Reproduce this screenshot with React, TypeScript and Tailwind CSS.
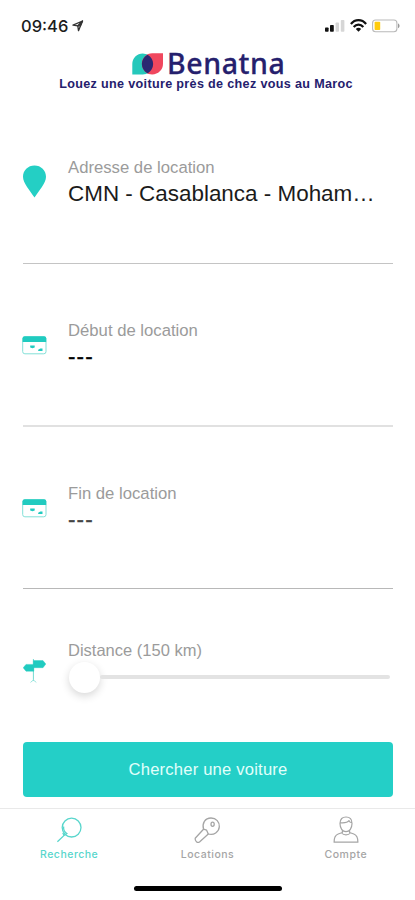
import type { ReactNode } from "react";

const sans = "font-['Liberation_Sans',Arial,sans-serif]";

function StatusBar() {
  return (
    <div className="flex h-[50px] items-start justify-between pt-[15px] pl-[21px] pr-[15px]">
      <div className="flex items-start gap-[4px]">
        <span className="font-['Inter',sans-serif] text-[16.5px] leading-[22px] font-medium text-[#1c1c1c]">09:46</span>
        <svg className="mt-[5px]" width="12" height="12" viewBox="0 0 12 12" fill="none" stroke="#333" strokeWidth="1.3" strokeLinejoin="round">
          <path d="M10.5 1 L1 5.2 L5.8 5.8 L6.5 10.7 Z" />
          <path d="M10.5 1 L5.8 5.8 L8.4 5.8 Z" fill="#333" />
        </svg>
      </div>
      <div className="flex items-start pt-[4px]">
        <svg width="20" height="14" viewBox="0 0 20 14">
          <rect x="0" y="8.5" width="3.6" height="4.2" rx="0.8" fill="#111" />
          <rect x="5" y="6" width="3.8" height="6.7" rx="0.8" fill="#111" />
          <rect x="10.6" y="3.5" width="3.4" height="9.2" rx="0.8" fill="#d6d6d6" />
          <rect x="15.8" y="1" width="3.6" height="11.7" rx="0.8" fill="#d6d6d6" />
        </svg>
        <svg className="ml-[5px]" width="17" height="14" viewBox="0 0 17 14" fill="none" stroke="#111" strokeWidth="2.2">
          <path d="M0.9 5 C5 -0.1 12 -0.1 16.1 5" />
          <path d="M3.7 8 C6.4 4.8 10.6 4.8 13.3 8" />
          <path d="M5.8 10 C7.3 8.4 9.7 8.4 11.2 10 L8.5 12.8 Z" fill="#111" stroke="none" />
        </svg>
        <svg className="ml-[5px]" width="28" height="14" viewBox="0 0 28 14">
          <rect x="0.6" y="1" width="24.3" height="11.8" rx="3" fill="#fff" stroke="#b9b9b9" strokeWidth="1.1" />
          <rect x="2.6" y="2.8" width="5.6" height="8.2" rx="0.8" fill="#ffcb0c" />
          <path d="M26 4.6 C28 5.3 28 8.5 26 9.2 Z" fill="#999" />
        </svg>
      </div>
    </div>
  );
}

function Brand() {
  return (
    <div className="h-[51px] text-[#25206d]">
      <div className="flex h-[27px] items-start pl-[132px]">
        <svg className="mt-[2.5px] shrink-0" width="31" height="22" viewBox="0 0 31 22">
          <path d="M0.3 21.5 V11 A10.5 10.5 0 0 1 10.8 0.4 A10.5 10.5 0 0 1 21 11 A10.5 10.5 0 0 1 10.8 21.5 Z" fill="#25c8bb" />
          <path d="M31 0.3 H20.2 A10.4 10.4 0 0 0 9.8 11 A10.4 10.4 0 0 0 20.2 21.5 A10.8 10.8 0 0 0 31 10.7 Z" fill="#f0475e" />
          <path d="M15.5 1.8 C23 6 23 16 15.5 20.4 C8 16 8 6 15.5 1.8 Z" fill="#2b2772" />
        </svg>
        <span className="ml-[4px] font-['Noto_Sans',sans-serif] text-[28.5px] leading-[27px] font-medium tracking-[0.6px] [-webkit-text-stroke:0.3px_currentColor]">Benatna</span>
      </div>
      <p className={`${sans} text-center text-[12.6px] leading-[15px] font-bold whitespace-nowrap tracking-[0.33px] -translate-x-[1.5px]`}>
        Louez une voiture près de chez vous au Maroc
      </p>
    </div>
  );
}

function Field({ icon, label, line, children }: { icon: ReactNode; label: string; line: string; children: ReactNode }) {
  return (
    <section className={`mr-[22px] ml-[23px] flex ${line}`}>
      <div className="w-[45px] shrink-0 pt-[64px]">{icon}</div>
      <div className={`${sans} min-w-0 flex-1 pt-[57px]`}>
        <div className="text-[16.7px] leading-[20px] text-[#9b9b9b]">{label}</div>
        <div className="mt-[2px] text-[22.45px] leading-[28px] whitespace-nowrap text-[#1b1b1b]">{children}</div>
      </div>
    </section>
  );
}

function CardIcon() {
  return (
    <svg className="mt-[8px] -ml-px" width="25" height="19" viewBox="0 0 25 19">
      <rect x="0.7" y="0.8" width="23.3" height="17" rx="2.2" fill="#fff" stroke="#83e0d8" strokeWidth="1" />
      <path d="M0.6 6 V2.2 Q0.6 0.3 2.6 0.3 H22.2 Q24.2 0.3 24.2 2.2 V6 Z" fill="#20cbc0" />
      <path d="M8.2 9.4 H12.7 V11.4 L10.5 12.3 L8.2 11.4 Z M16.2 13.8 L18.3 12.6 H20.5 V15 H16.2 Z" fill="#20cbc0" />
    </svg>
  );
}

function Dashes({ color }: { color: string }) {
  return <span className={`${color} tracking-[1.1px] [-webkit-text-stroke:0.3px_currentColor]`}>---</span>;
}

function Tab({ label, color, children }: { label: string; color: string; children: ReactNode }) {
  return (
    <div className={`flex flex-1 flex-col items-center pt-[7px] ${color}`}>
      {children}
      <span className="mt-[4px] font-['Inter',sans-serif] text-[10.5px] leading-[14px] font-medium tracking-[0.5px]">{label}</span>
    </div>
  );
}

export default function App() {
  return (
    <main className="flex h-[900px] w-[415px] flex-col overflow-hidden bg-white">
      <StatusBar />
      <Brand />
      <Field
        label="Adresse de location"
        line="h-[163px] border-b border-[#c4c4c4]"
        icon={
          <svg width="24" height="33" viewBox="0 0 24 33">
            <path d="M11.5 0.5 C18 0.5 23 5.4 23 11.7 C23 18.2 16 25.5 11.5 32.5 C7 25.5 0 18.2 0 11.7 C0 5.4 5 0.5 11.5 0.5 Z" fill="#24cfc4" />
          </svg>
        }
      >
        CMN - Casablanca - Moham…
      </Field>
      <Field label="Début de location" line="h-[163px] border-b-2 border-[#e1e1e1]" icon={<CardIcon />}>
        <Dashes color="text-black" />
      </Field>
      <Field label="Fin de location" line="h-[162px] border-b border-[#b8b8b8]" icon={<CardIcon />}>
        <Dashes color="text-[#444]" />
      </Field>
      <section className="mr-[22px] ml-[23px] flex h-[153px]">
        <div className="w-[45px] shrink-0 pt-[70px]">
          <svg width="24" height="25" viewBox="0 0 24 25">
            <path d="M10.4 0 V22" stroke="#73dad2" strokeWidth="1" />
            <path d="M7.5 23.4 L10.4 21 L13.3 23.4" fill="none" stroke="#9de6df" strokeWidth="1" />
            <path d="M10.4 1.6 H20 L22.8 5 L20 8.7 H10.4 Z" fill="#20cbc0" stroke="#20cbc0" strokeWidth="0.4" strokeLinejoin="round" />
            <path d="M10.8 5.4 H3 L0.2 8.8 L3 12.2 H10.8 Z" fill="#20cbc0" stroke="#20cbc0" strokeWidth="0.4" strokeLinejoin="round" />
          </svg>
        </div>
        <div className="flex-1 pt-[51px]">
          <div className={`${sans} text-[16.5px] leading-[20px] text-[#9b9b9b]`}>Distance (150 km)</div>
          <div className="mt-[1px] flex h-[32px] items-center">
            <div className="ml-[1px] size-[31px] shrink-0 rounded-full bg-white shadow-[0_3px_8px_rgba(0,0,0,0.16)]" />
            <div className="mr-[3px] h-[4px] flex-1 rounded-full bg-[#e3e3e3]" />
          </div>
        </div>
      </section>
      <button className={`${sans} mr-[22px] ml-[23px] h-[55px] shrink-0 rounded-[4px] bg-[#24cfc7] pt-[2px] text-[16.6px] tracking-[0.2px] text-[#e2fffb]`}>
        Chercher une voiture
      </button>
      <nav className="mt-[11px] flex h-[71px] shrink-0 border-t border-[#e9e9e9]">
        <Tab label="Recherche" color="text-[#58d6cc]">
          <svg width="28" height="28" viewBox="0 0 28 28" fill="none" stroke="currentColor" strokeWidth="1.3">
            <circle cx="16.6" cy="11.6" r="9.4" />
            <path d="M2.4 25.8 L10.2 18.4 M8.6 10.5 C8.4 13.8 9.5 16.2 11.8 17.5 L9 19.5 L7.8 16.8" />
          </svg>
        </Tab>
        <Tab label="Locations" color="text-[#a5a5a5]">
          <svg width="28" height="28" viewBox="0 0 28 28" fill="none" stroke="currentColor" strokeWidth="1.3" strokeLinejoin="round">
            <path d="M10.5 13.2 C8.9 7.3 12 2 18 2 C23.2 2 26.7 6 26.3 10.8 C26 16 20.7 19.7 15.3 18 L6.5 26 C4.5 27.2 1.7 25.3 2.2 22.2 L10.5 13.2 Z" />
            <path d="M10.5 13.2 L13.6 14.2 L15.3 18" />
            <ellipse cx="19.6" cy="8.2" rx="1.6" ry="2.1" />
          </svg>
        </Tab>
        <Tab label="Compte" color="text-[#a5a5a5]">
          <svg width="28" height="28" viewBox="0 0 28 28" fill="none" stroke="currentColor" strokeWidth="1.2" strokeLinejoin="round">
            <path d="M8 7.5 C8 2.8 10.5 1 14 1 C17.5 1 20 3 20 7.5 C20 12 17.6 15.7 14 15.7 C10.4 15.7 8 12 8 7.5 Z M8.2 6.7 C12 7 15.8 6.4 17 4.6 C17.5 6 18.5 6.5 19.8 6.7" />
            <path d="M10.4 14.2 V16.5 L6.2 18 C3 19.2 2 22 2.1 26.2 H25.9 C26 22 25 19.2 21.8 18 L17.6 16.5 V14.2 M9.7 17 C11.5 19.5 16.5 19.5 18.3 17" />
          </svg>
        </Tab>
      </nav>
      <div className="mx-auto mt-[7px] h-[5px] w-[148px] shrink-0 rounded-full bg-black" />
    </main>
  );
}
